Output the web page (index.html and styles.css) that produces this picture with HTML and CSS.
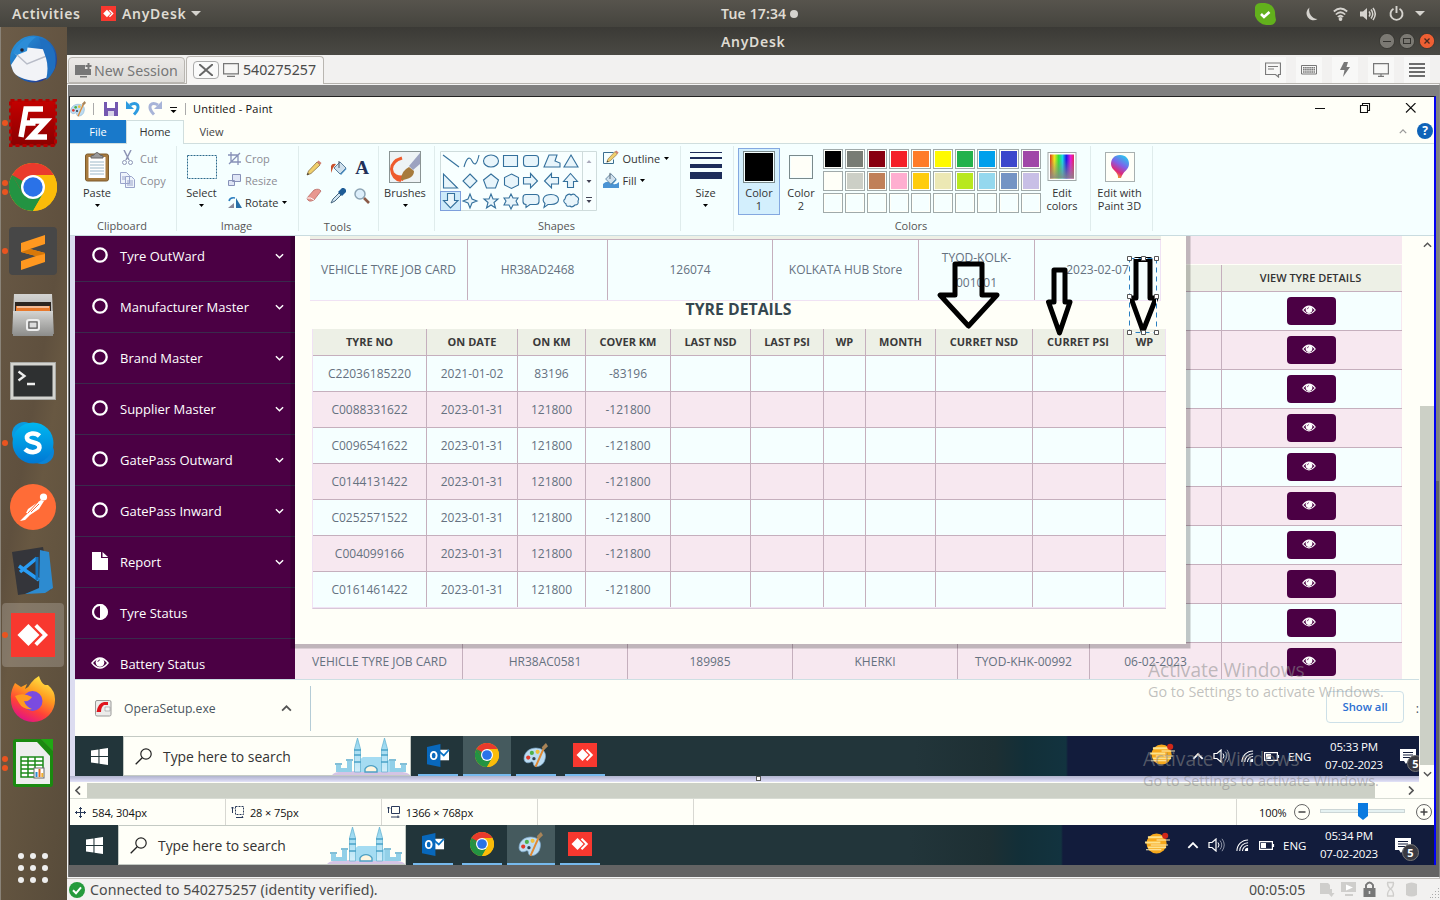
FILE: index.html
```html
<!DOCTYPE html>
<html lang="en">
<head>
<meta charset="utf-8">
<title>AnyDesk</title>
<link rel="stylesheet" href="styles.css">
</head>
<body>
<svg class="defs" width="0" height="0">
  <defs>
    <linearGradient id="rainbow"><stop offset="0" stop-color="#d83a1e"/><stop offset=".18" stop-color="#f5e61c"/><stop offset=".36" stop-color="#2ee03c"/><stop offset=".52" stop-color="#18d8e8"/><stop offset=".68" stop-color="#1818e8"/><stop offset=".86" stop-color="#e818d8"/><stop offset="1" stop-color="#e02858"/></linearGradient>
    <linearGradient id="fade" x2="0" y2="1"><stop offset=".2" stop-color="#888" stop-opacity="0"/><stop offset="1" stop-color="#888" stop-opacity=".9"/></linearGradient>
    <linearGradient id="pin" x1=".8" y1="0" x2=".3" y2="1"><stop offset="0" stop-color="#20d0f0"/><stop offset=".45" stop-color="#8060e8"/><stop offset=".75" stop-color="#e02878"/><stop offset="1" stop-color="#f0c020"/></linearGradient>
    <linearGradient id="skype" x2="0" y2="1"><stop offset="0" stop-color="#00b7f0"/><stop offset="1" stop-color="#0078d4"/></linearGradient>
    <linearGradient id="fox" x1=".8" y1="0" x2=".3" y2="1"><stop offset="0" stop-color="#fff04a"/><stop offset=".4" stop-color="#ff9a1f"/><stop offset=".7" stop-color="#ff4238"/><stop offset="1" stop-color="#e0108a"/></linearGradient>
    <linearGradient id="bird" x2="1" y2="1"><stop offset="0" stop-color="#2a9be0"/><stop offset=".6" stop-color="#1c60b4"/><stop offset="1" stop-color="#2a2078"/></linearGradient>
    <linearGradient id="steel" x2="0" y2="1"><stop offset="0" stop-color="#d4d4d2"/><stop offset="1" stop-color="#8c8c8a"/></linearGradient>
    <linearGradient id="redsq" x2="0" y2="1"><stop offset="0" stop-color="#c40000"/><stop offset="1" stop-color="#8a0000"/></linearGradient>
    <linearGradient id="ice" x2="0" y2="1"><stop offset="0" stop-color="#8fd4ee"/><stop offset="1" stop-color="#d2eefa"/></linearGradient>
    <symbol id="caret" viewBox="0 0 5 3"><path d="M0 0h5L2.500 3z"/></symbol>
    <symbol id="chev" viewBox="0 0 10 6"><path d="M1 1l4 4 4-4" fill="none" stroke="currentColor" stroke-width="1.600"/></symbol>
    <symbol id="ring" viewBox="0 0 16 16"><circle cx="8" cy="8" r="6.700" fill="none" stroke="currentColor" stroke-width="2.300"/></symbol>
    <symbol id="eye" viewBox="0 0 18 12"><path d="M1 6Q9-4 17 6 9 16 1 6z" fill="none" stroke="#fff" stroke-width="1.500"/><circle cx="9" cy="5.400" r="4.300" fill="#fff"/><path d="M6.800 5A2.300 2.300 0 0 1 9 2.900" fill="none" stroke="#4b0044" stroke-width=".8"/></symbol>
    <symbol id="chrome" viewBox="0 0 48 48"><circle cx="24" cy="24" r="24" fill="#fbbc09"/><path d="M3.200 12A24 24 0 0 0 24 48L34.400 30 24 24z" fill="#239342"/><path d="M24 12h20.800A24 24 0 0 1 24 48l10.400-18z" fill="#fbbc09"/><path d="M24 24L13.600 30 3.200 12A24 24 0 0 1 44.800 12H24z" fill="#ea3a2c"/><path d="M3.200 12l10.400 18L24 36V24z" fill="#239342"/><circle cx="24" cy="24" r="12" fill="#fff"/><circle cx="24" cy="24" r="9.700" fill="#2a72e8"/></symbol>
    <symbol id="anydesk" viewBox="0 0 24 24"><rect width="24" height="24" fill="#f8382f"/><path d="M3.500 12L9.500 6l6 6-6 6z" fill="#fff"/><path d="M13.500 6.800L18.700 12l-5.200 5.200" fill="none" stroke="#fff" stroke-width="2.100"/></symbol>
    <symbol id="palette" viewBox="0 0 24 24"><path d="M1 15C1 8 8 4 14 5c6 .5 9 5 7 11-1 5-7 8-10 6-2-2 0-4-3-4-3 2-7 1-7-3z" fill="#bcdcf2" stroke="#7aa6c8" stroke-width=".7"/><circle cx="5" cy="14" r="2" fill="#e03a2c"/><circle cx="8.500" cy="9.500" r="2" fill="#4cb04c"/><circle cx="14" cy="8.500" r="2" fill="#f0c03c"/><circle cx="10.500" cy="15" r="1.600" fill="#345"/><path d="M12 23L20 5" stroke="#e08a34" stroke-width="1.900"/><path d="M18 4l4-4 2 3-4 4z" fill="#a88458"/></symbol>
    <symbol id="outlook" viewBox="0 0 24 24"><path d="M11 6h12v11H11z" fill="#fff"/><path d="M13 8l4.500 4L23 6" fill="none" stroke="#0872c6" stroke-width="1.800"/><path d="M0 3l14-3v24L0 21z" fill="#0868bc"/><ellipse cx="7" cy="12" rx="3" ry="3.800" fill="none" stroke="#fff" stroke-width="2"/></symbol>
    <symbol id="win" viewBox="0 0 16 16"><path d="M0 2.300L7 1.300V7.500H0zM8 1.100L16 0v7.500H8zM0 8.500h7v6.200l-7-1zM8 8.500h8V16l-8-1.100z" fill="#fff"/></symbol>
    <symbol id="lens" viewBox="0 0 17 17"><circle cx="11" cy="6" r="5.200" fill="none" stroke="#222" stroke-width="1.200"/><path d="M7.200 9.800L.7 16.300" stroke="#222" stroke-width="1.300"/></symbol>
    <symbol id="castle" viewBox="0 0 78 37"><path d="M0 37q4-4 12-3 20-3 50 0 12-1 16 3z" fill="#d4c4e4"/><path d="M31 19h20l7 4v11H26V23z" fill="#a5dcf2"/><path d="M33 34v-3a7 7 0 0 1 12 0v3z" fill="#fff6e0" stroke="#4da0c4" stroke-width="1.400"/><path d="M22.500 34V11l3-11 3 11v23zM49.500 34V11l3-11 3 11v23z" fill="url(#ice)" stroke="#62b0d0" stroke-width=".7"/><path d="M22 12h7M22 17h7M22 24h7M49 12h7M49 17h7M49 24h7" stroke="#4aa2c8" stroke-width="1.300"/><path d="M4 27h5v7H4zM15 23h5v11h-5zM58 23h5v11h-5zM69 27h5v7h-5zM9 30h6v4H9zM63 30h6v4h-6z" fill="#92d0e8"/><path d="M3 26h7M14 22h7M57 22h7M68 26h7" stroke="#5aabcc" stroke-width="1.600"/></symbol>
    <symbol id="sun" viewBox="0 0 26 24"><circle cx="12" cy="12" r="10.500" fill="#f6a81c"/><path d="M3 5.500h16M0 11h16M3 16h19" stroke="#fde28c" stroke-width="2"/><path d="M12 8.400h14M6 13.600h18M1 18.500h16" stroke="#fff0b8" stroke-width="1.100"/><circle cx="21" cy="4" r="3.200" fill="#d02818"/></symbol>
    <symbol id="speaker" viewBox="0 0 17 14"><path d="M1 4.500h3l4-3.500v12L4 9.500H1z" fill="none" stroke="#fff" stroke-width="1.200"/><path d="M10 4.500q2 2.500 0 5" fill="none" stroke="#fff"/><path d="M12 2.500q3.500 4.500 0 9M14 .8q4.500 6 0 12.400" fill="none" stroke="#8d93a5"/></symbol>
    <symbol id="wifiw" viewBox="0 0 14 14"><path d="M1 13A12 12 0 0 1 13 1M4 13a9 9 0 0 1 9-9M7 13a6 6 0 0 1 6-6" fill="none" stroke="#fff" stroke-width="1.100"/><path d="M9.500 13a3.500 3.500 0 0 1 3.500-3.500V13z" fill="#fff"/></symbol>
    <symbol id="batt" viewBox="0 0 16 9"><path d="M.6.600h12.800v7.800H.6zM14.500 3v3" fill="none" stroke="#fff" stroke-width="1.200"/><path d="M2 2h5v5H2z" fill="#fff"/></symbol>
    <symbol id="note" viewBox="0 0 16 15"><path d="M0 0h16v12H8l-2 3-2-3H0z" fill="#fff"/><path d="M3 3.500h10M3 6h10M3 8.500h7" stroke="#121c3c"/></symbol>
    <symbol id="bucket" viewBox="0 0 16 16"><path d="M3 8l6-6 6 6-6 6z" fill="#cfe0ec" stroke="#5b7f9c"/><path d="M8 1v7" stroke="#456"/><path d="M9 14l6-6 .5 1-5.500 6z" fill="#4a8cc0"/></symbol>
    <symbol id="pencil" viewBox="0 0 16 16"><path d="M1 15l1.500-4L11 2l3 3-9 8.500z" fill="#f0cf6c" stroke="#8a7040" stroke-width=".8"/><path d="M11 2l1.500-1.500L15.500 3 14 5z" fill="#d08070"/><path d="M1 15l.8-2.200 1.400 1.400z" fill="#333"/></symbol>
  </defs>
</svg>

<header class="gnome">
  <span class="gnome-act">Activities</span>
  <svg class="gnome-ico" width="15" height="15"><use href="#anydesk"/></svg>
  <span class="gnome-app">AnyDesk</span>
  <svg class="gnome-caret" width="10" height="5" viewBox="0 0 10 5"><path d="M0 0h10L5 5z"/></svg>
  <span class="gnome-clock">Tue 17:34<i></i></span>
  <div class="tray">
    <svg width="22" height="22" viewBox="0 0 22 22"><path d="M1 4Q2 0 7 0q12-1 14 9 0 4 1 8-1 5-6 5Q5 23 1 13z" fill="#62b01c"/><path d="M7 11l3 3 5.500-5" fill="none" stroke="#fff" stroke-width="2.600"/></svg>
    <svg class="tray-moon" width="13" height="14" viewBox="0 0 13 14"><path d="M4.500.5a9 9 0 0 0 8 11.500A7 7 0 1 1 4.500.500z" fill="#d5d3ce"/></svg>
    <svg class="tray-wifi" width="15" height="14" viewBox="0 0 15 14"><path d="M.8 4.500q6.700-6 13.400 0M2.800 7.500q4.700-4.500 9.400 0M4.800 10q2.700-2.500 5.400 0" fill="none" stroke="#d5d3ce" stroke-width="1.700"/><circle cx="7.500" cy="12" r="1.900" fill="#d5d3ce"/></svg>
    <svg class="tray-vol" width="16" height="14" viewBox="0 0 16 14"><path d="M0 4.500h3L7 1v12L3 9.500H0z" fill="#d5d3ce"/><path d="M9 4.500q2 2.500 0 5M11 2.500q3.500 4.500 0 9M13 1q4.500 6 0 12" fill="none" stroke="#d5d3ce" stroke-width="1.500"/></svg>
    <svg class="tray-pow" width="15" height="15" viewBox="0 0 15 15"><path d="M4.500 2.700a6 6 0 1 0 6 0M7.500 0v7" fill="none" stroke="#d5d3ce" stroke-width="1.900"/></svg>
    <svg class="tray-caret" width="10" height="5" viewBox="0 0 10 5"><path d="M0 0h10L5 5z"/></svg>
  </div>
</header>

<div class="desk">
  <nav class="dock">
    <div class="app"><svg width="48" height="48" viewBox="0 0 48 48"><circle cx="24.500" cy="24" r="23.500" fill="url(#bird)"/><path d="M2 30L14 12l27 3-1 27L27 46Q8 44 4 36z" fill="#f2f3f7"/><path d="M6 18l12 11 22-9" fill="none" stroke="#b8bcc8" stroke-width="1.500"/><path d="M4 18Q14 0 27 2 18 8 18 16L8 20z" fill="#2c8dd8"/><path d="M30 3q20 6 16 30-4 9-9 12 3-12 0-22z" fill="#1f6fc0"/><circle cx="13" cy="15" r="1.800" fill="#223"/></svg></div>
    <div class="app run"><svg width="48" height="48" viewBox="0 0 48 48"><rect x="1.500" y="1.500" width="45" height="45" fill="url(#redsq)" stroke="#b40000" stroke-width="3" stroke-dasharray="4 3"/><path d="M12 38L17 10h17M14.500 24h12M21 22h16L22 38h16" fill="none" stroke="#fff" stroke-width="5.500"/></svg></div>
    <div class="app run two"><svg width="48" height="48"><use href="#chrome"/></svg></div>
    <div class="app run"><svg width="48" height="48" viewBox="0 0 48 48"><rect width="48" height="48" rx="4" fill="#474747"/><path d="M36 8v9l-15 5 15 4v9L12 43V34l15-5-15-4V16z" fill="#ff9820"/><path d="M12 25l9-3 15 4v1l-9 2z" fill="#d87808"/></svg></div>
    <div class="app"><svg width="48" height="48" viewBox="0 0 48 48"><path d="M5 3h38l2 40H3z" fill="url(#steel)"/><path d="M6 11h36v9H6z" fill="#2d2520"/><path d="M7 15h34v5H7z" fill="#e8792c"/><path d="M8 16h32" stroke="#fff"/><path d="M4 20h40v25H4z" fill="url(#steel)"/><rect x="18" y="29" width="12" height="10" rx="2" fill="none" stroke="#eee" stroke-width="2"/><rect x="20" y="31" width="8" height="6" fill="#ddd" stroke="#555"/></svg></div>
    <div class="app term"><svg width="46" height="38" viewBox="0 0 46 38"><rect x=".5" y=".5" width="45" height="37" fill="#d4d4d0" stroke="#a8a8a4"/><rect x="3.500" y="3.500" width="39" height="31" fill="#2e3031"/><path d="M8.500 9.500l6 4.500-6 4.500M17 22h8" fill="none" stroke="#eee" stroke-width="2.300"/></svg></div>
    <div class="app run"><svg width="44" height="44" viewBox="0 0 44 44"><circle cx="13" cy="13" r="12" fill="#0a9ae0"/><circle cx="31" cy="31" r="12" fill="#0a84d8"/><circle cx="22" cy="22" r="20.500" fill="url(#skype)"/><path d="M28.500 15q-3-3-7.500-2.500-5.500.8-5 4.700.5 3 6 4 7 1.300 6.500 5.500-.7 4-6.500 4.500-5 0-8-3" fill="none" stroke="#fff" stroke-width="4.600"/></svg></div>
    <div class="app"><svg width="46" height="46" viewBox="0 0 46 46"><circle cx="23" cy="23" r="23" fill="#ff6c37"/><circle cx="33.500" cy="13" r="3.600" fill="#fff"/><path d="M31 16L18 25l-2 4 2 0-8 8 5-1 5-5 9-6 5-8z" fill="#fff"/><path d="M18 29l10-11M21 28l8-8" stroke="#ff6c37"/></svg></div>
    <div class="app"><svg width="42" height="48" viewBox="0 0 42 48"><path d="M0 5l31-5 8 43-33 5z" fill="#34353a"/><path d="M28 3l9 2 4 36-8 5-20 1 14-6z" fill="#2d8bd0"/><path d="M25 11L8 25M7 19l20 14" fill="none" stroke="#2a9df4" stroke-width="3.500"/><path d="M25 10v23" stroke="#1670b8" stroke-width="3"/></svg></div>
    <div class="app run on"><svg width="44" height="44"><use href="#anydesk"/></svg></div>
    <div class="app"><svg width="46" height="46" viewBox="0 0 46 46"><path d="M1 23Q0 16 5 7l6 4 6-3-2 5q4-2 6-6 4-5 8-7 2 7 6 9l3 0q7 6 7 14A22 22 0 0 1 23 46 22 22 0 0 1 1 23z" fill="url(#fox)"/><circle cx="22.500" cy="25" r="10" fill="#7a4be0"/><path d="M5 20q8-4 17 1-3 5-8 4 2 6 8 8-9 1-13-6z" fill="#ff9a20"/></svg></div>
    <div class="app run two"><svg width="40" height="48" viewBox="0 0 40 48"><path d="M3 0h25l12 12v33q0 3-3 3H3q-3 0-3-3V3q0-3 3-3z" fill="#1a8a10"/><path d="M28 0h12v12z" fill="#20a814"/><path d="M3 3h21l13 14v28H3z" fill="#eee"/><path d="M8 18h22v20H8zM8 22h22M8 26h22M8 30h22M8 34h22M15 18v20M22 18v20" fill="#fff" stroke="#1c8a1a" stroke-width="1.500"/><rect x="21" y="29" width="10" height="10" fill="#fff" stroke="#666"/><path d="M26.500 38v-8" stroke="#e06820" stroke-width="2"/><path d="M23.500 38v-5" stroke="#2a8ad0" stroke-width="2"/><path d="M29.300 38v-4" stroke="#f0b030" stroke-width="2"/></svg></div>
    <svg class="grid-ico" width="30" height="30" viewBox="0 0 30 30" fill="#eee"><circle cx="3" cy="3" r="3"/><circle cx="15" cy="3" r="3"/><circle cx="27" cy="3" r="3"/><circle cx="3" cy="15" r="3"/><circle cx="15" cy="15" r="3"/><circle cx="27" cy="15" r="3"/><circle cx="3" cy="27" r="3"/><circle cx="15" cy="27" r="3"/><circle cx="27" cy="27" r="3"/></svg>
  </nav>

  <section class="window">
    <div class="wtitle"><span>AnyDesk</span>
      <div class="wbtns">
        <svg width="16" height="16" viewBox="0 0 16 16"><circle cx="8" cy="8" r="7.600" fill="#7b7973" stroke="#34332f" stroke-width=".8"/><path d="M4 8.500h8" stroke="#34332f"/></svg>
        <svg width="16" height="16" viewBox="0 0 16 16"><circle cx="8" cy="8" r="7.600" fill="#7b7973" stroke="#34332f" stroke-width=".8"/><rect x="4.500" y="5.500" width="7" height="5" fill="none" stroke="#34332f"/></svg>
        <svg width="16" height="16" viewBox="0 0 16 16"><circle cx="8" cy="8" r="7.600" fill="#ef5f33" stroke="#34332f" stroke-width=".8"/><path d="M5.500 5.500l5 5M10.500 5.500l-5 5" stroke="#4a2a20" stroke-width="1.300"/></svg>
      </div>
    </div>
    <div class="tabs">
      <div class="tab idle"><svg width="17" height="15" viewBox="0 0 17 15"><path d="M0 2h10v4h6v6H0zM5 13h7v1.500H5z" fill="#777"/><path d="M13.500 0v6M10.500 3h6" stroke="#777" stroke-width="2"/></svg>New Session</div>
      <div class="tab live"><span class="close"><svg width="14" height="12" viewBox="0 0 14 12"><path d="M0 0l14 12M14 0L0 12" stroke="#666" stroke-width="2"/></svg></span><svg width="16" height="14" viewBox="0 0 16 14"><path d="M.6.600h14.800v10.200H.6zM4 13.400h8" fill="none" stroke="#777" stroke-width="1.200"/></svg>540275257</div>
      <div class="tools-r">
        <i><svg width="16" height="16" viewBox="0 0 16 16"><path d="M.5 1h15v11.500h-2v2.500l-3-2.500H.5zM3 4.500h10M3 7h6" fill="none" stroke="#7b7b7b" stroke-width="1.200"/></svg></i>
        <i><svg width="16" height="10" viewBox="0 0 16 10"><path d="M.5.500h15v8.500H.5z" fill="none" stroke="#777"/><path d="M2 2.700h12M2 4.800h12M2 7h12" stroke="#777" stroke-width="1.400" stroke-dasharray="1.600 .5"/></svg></i>
        <i><svg width="10" height="16" viewBox="0 0 10 16"><path d="M4 0h4L6.500 5H10L3 15l1.500-7H0z" fill="#777"/></svg></i>
        <i><svg width="16" height="14" viewBox="0 0 16 14"><path d="M.6.600h14.800v10.200H.6zM8 11v2M5 13.400h6" fill="none" stroke="#777" stroke-width="1.200"/></svg></i>
        <i><svg width="16" height="14" viewBox="0 0 16 14"><path d="M0 1h16M0 5h16M0 9h16M0 13h16" stroke="#6d6d6d" stroke-width="2"/></svg></i>
      </div>
    </div>

    <div class="view">
      <main class="paint">
        <div class="ptitle">
          <svg width="16" height="16"><use href="#palette"/></svg><b class="bar"></b>
          <svg class="q1" width="14" height="14" viewBox="0 0 14 14"><path d="M0 0h14v14H0z" fill="#7458b0"/><path d="M3 0h8v6H3z" fill="#fff"/><path d="M4 9h6v5H4z" fill="#d8d4e8"/></svg>
          <svg class="q2" width="14" height="15" viewBox="0 0 14 15"><path d="M0 0v8h8z" fill="#2d9be0"/><path d="M4 4q5-3 7.500 0 2 4-3.500 9.500" fill="none" stroke="#2d9be0" stroke-width="3"/></svg>
          <svg class="q3" width="14" height="15" viewBox="0 0 14 15"><path d="M14 0v8H6z" fill="#a8b4d8"/><path d="M10 4Q5 1 2.500 4q-2 4 3.500 9.500" fill="none" stroke="#a8b4d8" stroke-width="3"/></svg>
          <svg class="q4" width="7" height="6" viewBox="0 0 7 6"><path d="M0 .5h7" stroke="#111"/><path d="M.5 3h6l-3 3z"/></svg><b class="bar"></b>
          <span>Untitled - Paint</span>
          <svg class="wc" width="102" height="10" viewBox="0 0 102 10" fill="none" stroke="#111"><path d="M0 5.500h10M45.500 2.500h7v7h-7zM47.500 2.500v-2h7v7h-2M91 0l9.500 9.500M100.500 0L91 9.500" stroke-width="1.100"/></svg>
        </div>
        <div class="ptabs"><span class="file">File</span><span class="home">Home</span><span class="vw">View</span>
          <svg class="up" width="8" height="5"><use href="#chev"/></svg><span class="help">?</span></div>
        <div class="ribbon">
          <div class="grp g-clip"><div class="row">
            <div class="big"><svg width="32" height="32" viewBox="0 0 32 32"><rect x="4.500" y="3" width="23" height="27" rx="2" fill="#a77b3e" stroke="#7d5b2c"/><path d="M7.500 6h17v21h-17z" fill="#fff"/><path d="M9 11h14M9 14h14M9 17h14M9 20h14M9 23h14" stroke="#9db8c8"/><path d="M10 5l3-1q3-5 6 0l3 1v2H10z" fill="#999" stroke="#666"/></svg><span>Paste</span><svg class="car"><use href="#caret"/></svg></div>
            <div class="col off"><div><svg width="16" height="16" viewBox="0 0 16 16"><path d="M4 0l5 10M11 0L6 10" stroke="#8e95b5" stroke-width="1.500"/><circle cx="4.500" cy="12.500" r="2" fill="none" stroke="#8e95b5"/><circle cx="10.500" cy="12.500" r="2" fill="none" stroke="#8e95b5"/></svg>Cut</div><div><svg width="16" height="16" viewBox="0 0 16 16"><path d="M.5.500h6l3 3v8h-9zM5.500 4.500h6l3 3v8h-9z" fill="#eef4fb" stroke="#9aa4cb"/><path d="M7 9h6M7 11h6M7 13h6M2 5h3M2 7h3" stroke="#9aa4cb"/></svg>Copy</div></div>
          </div><label>Clipboard</label></div>
          <div class="grp g-img"><div class="row">
            <div class="big"><svg width="32" height="32" viewBox="0 0 32 32"><rect x="1.500" y="4.500" width="29" height="23" fill="none" stroke="#2d6a8c" stroke-dasharray="2 1"/></svg><span>Select</span><svg class="car"><use href="#caret"/></svg></div>
            <div class="col"><div class="off"><svg width="13" height="13" viewBox="0 0 13 13"><path d="M3 0v10h10M0 3h10v10M1 12L12 1" fill="none" stroke="#8791b8" stroke-width="1.300"/></svg>Crop</div><div class="off"><svg width="13" height="13" viewBox="0 0 13 13"><path d="M4.500.500h8v7h-8zM.5 6.500h6v5h-6z" fill="#dfe6f6" stroke="#8791b8"/></svg>Resize</div><div><svg width="14" height="13" viewBox="0 0 14 13"><path d="M0 12h6V7z" fill="#889"/><path d="M8 12V2l6 10z" fill="#2870a8"/><path d="M1 5q1-4 6-3" fill="none" stroke="#2d7fc0" stroke-width="1.500"/></svg>Rotate<svg class="car"><use href="#caret"/></svg></div></div>
          </div><label>Image</label></div>
          <div class="grp g-tools"><div class="toolgrid">
            <svg width="16" height="16"><use href="#pencil"/></svg>
            <svg width="17" height="16" viewBox="0 0 17 16"><g transform="translate(1)"><use href="#bucket" width="16" height="16"/></g><path d="M1 13V6q1-3 5-2L3 8z" fill="#c8502c"/></svg>
            <b class="glyphA">A</b>
            <svg width="16" height="15" viewBox="0 0 16 15"><path d="M1 10l7-8q5-2 7 1l-7 9q-6 3-7-2z" fill="#e89890" stroke="#b86a64" stroke-width=".8"/><path d="M1 10q4-1 7 2" fill="none" stroke="#fff"/></svg>
            <svg width="16" height="16" viewBox="0 0 16 16"><path d="M1 15l2-4 6-6 2 2-6 6z" fill="#cfe4f2" stroke="#47667e"/><path d="M8 4l4-4q3-.5 4 2v2l-4 4z" fill="#1e5c96"/></svg>
            <svg width="16" height="16" viewBox="0 0 16 16"><circle cx="6" cy="6" r="5" fill="#dceefa" stroke="#8ca4b4" stroke-width="1.500"/><path d="M10 10l5 5" stroke="#8a5a48" stroke-width="2.600"/></svg>
          </div><label>Tools</label></div>
          <div class="grp g-brush"><div class="row"><div class="big"><svg width="32" height="32" viewBox="0 0 32 32"><rect x=".5" y=".5" width="31" height="31" fill="#eef3f5" stroke="#8a9494"/><path d="M13 7Q3 10 2.500 18q1 10 9.500 11.500" fill="none" stroke="#ee5a2c" stroke-width="3"/><path d="M4 20q4 6 12 4l-2 6Q5 29 4 20z" fill="#ee5a2c"/><path d="M31 2L20 15l4 4 7-6z" fill="#9ca2c0"/><path d="M12 29q0-9 8-13l5 4q0 8-13 9z" fill="#a77a3c"/></svg><span>Brushes</span><svg class="car"><use href="#caret"/></svg></div></div></div>
          <div class="grp g-shapes"><div class="row">
            <svg class="gallery" width="157" height="60" viewBox="440 151 157 60"><path d="M440.500 151.500h156v59h-156zM582.500 151.500v59" fill="#f8ffff" stroke="#cfdcdc"/><rect x="440.500" y="191.500" width="20" height="19" fill="#cdeafa" stroke="#7d9fdc"/>
              <g fill="#e8f5fb" stroke="#34709c" stroke-width="1.100"><path d="M443 155l16 12"/><path d="M464 167q4-14 8-6t7-6" fill="none"/><ellipse cx="491" cy="161" rx="7.500" ry="6"/><path d="M503.500 155.500h14v11h-14z"/><rect x="523.500" y="155.500" width="15" height="11" rx="3"/><path d="M544 167l5-12h8l-2 6 5 2v4z"/><path d="M571 155l7 12h-14z"/>
              <path d="M443.500 174v14h14z"/><path d="M470 174l7 7-7 7-7-7z"/><path d="M491 174l7.500 6-3 8h-9l-3-8z"/><path d="M511.500 174l7 3.500v7.500l-7 3.500-7-3.500v-7.500z"/><path d="M523.500 177.500h7v-4l7 7.500-7 7v-4h-7z"/><path d="M558.500 177.500h-7v-4l-7 7.500 7 7v-4h7z"/><path d="M567.500 187.500v-6h-4l7-8 7 8h-4v6z"/>
              <path d="M447.500 193.500h7v7h3.500l-7.500 7.500-7-7.500h4z"/><path d="M470 194l2 5 5 2-5 2-2 5-2-5-5-2 5-2z"/><path d="M491 194l2 5h5l-4 3.500 1.500 5.500-4.500-3-4.500 3 1.500-5.500-4-3.500h5z"/><path d="M511 194l2 4h5l-2 3 2 4h-5l-2 4-2-4h-5l2-4-2-3h5z"/><path d="M526 194.500h10q3 0 3 3v4q0 3-3 3h-6l-4 3v-3q-3 0-3-3v-4q0-3 3-3z"/><path d="M551 194.500c10 0 10 10 0 10l-3 0-4 3 1-4c-4-4-1-9 6-9z"/><path d="M566 196q3-3 5-1 3-2 5 1 4 2 2 5 1 4-3 4-3 3-5 1-4 1-4-2-4-3-1-5z"/></g>
              <path d="M586.500 163h5l-2.500-3z" fill="#aab"/><path d="M586.500 180h5l-2.500 3zM586.500 200h5l-2.500 3zM586 197h6v1h-6z" fill="#445"/></svg>
            <div class="col"><div><svg width="16" height="16" viewBox="0 0 16 16"><path d="M.5 2.500h10M.5 2.500v11h10v-4" fill="none" stroke="#3b6f90"/><use href="#pencil" x="3" width="13" height="13"/></svg>Outline<svg class="car"><use href="#caret"/></svg></div><div><svg width="16" height="16" viewBox="0 0 16 16"><path d="M0 12q4-4 8-1t8-1v6H0z" fill="#4a94d4"/><use href="#bucket" width="14" height="14"/></svg>Fill<svg class="car"><use href="#caret"/></svg></div></div>
          </div><label>Shapes</label></div>
          <div class="grp g-size"><div class="row"><div class="big"><svg width="32" height="32" viewBox="0 0 32 32"><path d="M0 1h32v1H0zM0 6h32v2H0zM0 13h32v4H0zM0 21h32v7H0z" fill="#1d2d5a"/></svg><span>Size</span><svg class="car"><use href="#caret"/></svg></div></div></div>
          <div class="grp g-colors"><div class="row">
            <div class="big sel"><i class="c1"></i><span>Color<br>1</span></div>
            <div class="big"><i class="c2"></i><span>Color<br>2</span></div>
            <div class="pal"><i class="k1"></i><i class="k2"></i><i class="k3"></i><i class="k4"></i><i class="k5"></i><i class="k6"></i><i class="k7"></i><i class="k8"></i><i class="k9"></i><i class="k10"></i><i class="k11"></i><i class="k12"></i><i class="k13"></i><i class="k14"></i><i class="k15"></i><i class="k16"></i><i class="k17"></i><i class="k18"></i><i class="k19"></i><i class="k20"></i><i></i><i></i><i></i><i></i><i></i><i></i><i></i><i></i><i></i><i></i></div>
            <div class="big edit"><svg width="32" height="32" viewBox="0 0 32 32"><rect x="2" y="1.500" width="28" height="28" fill="#fff" stroke="#a0a8a8"/><path d="M4 3.500h24v24H4z" fill="url(#rainbow)"/><path d="M4 3.500h24v24H4z" fill="url(#fade)"/></svg><span>Edit<br>colors</span></div>
          </div><label>Colors</label></div>
          <div class="grp g-3d"><div class="row"><div class="big"><svg width="32" height="32" viewBox="0 0 32 32"><rect x="1.500" y="1.500" width="29" height="29" fill="#fffff8" stroke="#a8b0b0"/><path d="M16 4c6 0 9 4 9 9 0 6-6 7-8 14l-3 0c1-6-7-8-7-14 0-5 3-9 9-9z" fill="url(#pin)"/></svg><span>Edit with<br>Paint 3D</span></div></div></div>
        </div>

        <div class="work">
          <div class="canvas">
            <div class="page">
              <ul class="side">
                <li><svg width="16" height="16"><use href="#ring"/></svg><span>Tyre OutWard</span><svg class="ch"><use href="#chev"/></svg></li>
                <li><svg width="16" height="16"><use href="#ring"/></svg><span>Manufacturer Master</span><svg class="ch"><use href="#chev"/></svg></li>
                <li><svg width="16" height="16"><use href="#ring"/></svg><span>Brand Master</span><svg class="ch"><use href="#chev"/></svg></li>
                <li><svg width="16" height="16"><use href="#ring"/></svg><span>Supplier Master</span><svg class="ch"><use href="#chev"/></svg></li>
                <li><svg width="16" height="16"><use href="#ring"/></svg><span>GatePass Outward</span><svg class="ch"><use href="#chev"/></svg></li>
                <li><svg width="16" height="16"><use href="#ring"/></svg><span>GatePass Inward</span><svg class="ch"><use href="#chev"/></svg></li>
                <li><svg width="16" height="18" viewBox="0 0 16 18"><path d="M0 0h9v6h7v12H0z" fill="#fff"/><path d="M10.500 0L16 5h-5.500z" fill="#fff"/></svg><span>Report</span><svg class="ch"><use href="#chev"/></svg></li>
                <li><svg width="16" height="16" viewBox="0 0 16 16"><circle cx="8" cy="8" r="6.900" fill="none" stroke="#fff" stroke-width="2"/><path d="M8 1a7 7 0 0 0 0 14z" fill="#4b0044"/><path d="M8 1a7 7 0 0 1 0 14z" fill="#fff"/><circle cx="8" cy="8" r="6.900" fill="none" stroke="#fff" stroke-width="2"/></svg><span>Tyre Status</span></li>
                <li><svg class="weye" width="18" height="12"><use href="#eye"/></svg><span>Battery Status</span></li>
              </ul>
              <div class="back">
                <div class="band"></div>
                <div class="br hd"><span></span><span></span><span></span><span></span><span></span><span></span><span>VIEW TYRE DETAILS</span></div>
                <div class="br"><span></span><span></span><span></span><span></span><span></span><span></span><span><b><svg width="14" height="10"><use href="#eye"/></svg></b></span></div>
                <div class="br"><span></span><span></span><span></span><span></span><span></span><span></span><span><b><svg width="14" height="10"><use href="#eye"/></svg></b></span></div>
                <div class="br"><span></span><span></span><span></span><span></span><span></span><span></span><span><b><svg width="14" height="10"><use href="#eye"/></svg></b></span></div>
                <div class="br"><span></span><span></span><span></span><span></span><span></span><span></span><span><b><svg width="14" height="10"><use href="#eye"/></svg></b></span></div>
                <div class="br"><span></span><span></span><span></span><span></span><span></span><span></span><span><b><svg width="14" height="10"><use href="#eye"/></svg></b></span></div>
                <div class="br"><span></span><span></span><span></span><span></span><span></span><span></span><span><b><svg width="14" height="10"><use href="#eye"/></svg></b></span></div>
                <div class="br"><span></span><span></span><span></span><span></span><span></span><span></span><span><b><svg width="14" height="10"><use href="#eye"/></svg></b></span></div>
                <div class="br"><span></span><span></span><span></span><span></span><span></span><span></span><span><b><svg width="14" height="10"><use href="#eye"/></svg></b></span></div>
                <div class="br"><span></span><span></span><span></span><span></span><span></span><span></span><span><b><svg width="14" height="10"><use href="#eye"/></svg></b></span></div>
                <div class="br last"><span>VEHICLE TYRE JOB CARD</span><span>HR38AC0581</span><span>189985</span><span>KHERKI</span><span>TYOD-KHK-00992</span><span>06-02-2023</span><span><b><svg width="14" height="10"><use href="#eye"/></svg></b></span></div>
              </div>
              <div class="modal">
                <div class="job"><span>VEHICLE TYRE JOB CARD</span><span>HR38AD2468</span><span>126074</span><span>KOLKATA HUB Store</span><span>TYOD-KOLK-<br>001001</span><span>2023-02-07</span></div>
                <h2>TYRE DETAILS</h2>
                <div class="tt">
                  <div class="tr th"><span>TYRE NO</span><span>ON DATE</span><span>ON KM</span><span>COVER KM</span><span>LAST NSD</span><span>LAST PSI</span><span>WP</span><span>MONTH</span><span>CURRET NSD</span><span>CURRET PSI</span><span>WP</span></div>
                  <div class="tr"><span>C22036185220</span><span>2021-01-02</span><span>83196</span><span>-83196</span><span></span><span></span><span></span><span></span><span></span><span></span><span></span></div>
                  <div class="tr"><span>C0088331622</span><span>2023-01-31</span><span>121800</span><span>-121800</span><span></span><span></span><span></span><span></span><span></span><span></span><span></span></div>
                  <div class="tr"><span>C0096541622</span><span>2023-01-31</span><span>121800</span><span>-121800</span><span></span><span></span><span></span><span></span><span></span><span></span><span></span></div>
                  <div class="tr"><span>C0144131422</span><span>2023-01-31</span><span>121800</span><span>-121800</span><span></span><span></span><span></span><span></span><span></span><span></span><span></span></div>
                  <div class="tr"><span>C0252571522</span><span>2023-01-31</span><span>121800</span><span>-121800</span><span></span><span></span><span></span><span></span><span></span><span></span><span></span></div>
                  <div class="tr"><span>C004099166</span><span>2023-01-31</span><span>121800</span><span>-121800</span><span></span><span></span><span></span><span></span><span></span><span></span><span></span></div>
                  <div class="tr"><span>C0161461422</span><span>2023-01-31</span><span>121800</span><span>-121800</span><span></span><span></span><span></span><span></span><span></span><span></span><span></span></div>
                </div>
              </div>
            </div>
            <div class="dl">
              <svg width="17" height="17" viewBox="0 0 17 17"><rect x=".5" y=".5" width="15.500" height="15.500" rx="1.500" fill="#ececea" stroke="#9a9a98"/><path d="M1.500 12Q3 3 9 2h4v3H9q-3 2-3 7z" fill="#e0141c"/><path d="M10 7h5v4h-5z" fill="#f4f4f4" stroke="#999" stroke-width=".6"/></svg>
              <span>OperaSetup.exe</span><svg class="dlc" width="11" height="7"><use href="#chev"/></svg><i></i><b>Show all</b><em>:</em>
            </div>
            <div class="taskbar">
              <div class="start"><svg width="17" height="17"><use href="#win"/></svg></div>
              <div class="search"><svg width="17" height="17"><use href="#lens"/></svg><span>Type here to search</span><svg class="cas" width="78" height="37"><use href="#castle"/></svg></div>
              <div class="ta ol"><svg width="23" height="23"><use href="#outlook"/></svg></div>
              <div class="ta cr act"><svg width="24" height="24"><use href="#chrome"/></svg></div>
              <div class="ta pt"><svg width="25" height="25"><use href="#palette"/></svg></div>
              <div class="ta ad"><svg width="24" height="24"><use href="#anydesk"/></svg></div>
              <div class="systray"><svg width="25" height="23"><use href="#sun"/></svg><svg class="s2" width="12" height="7"><use href="#chev"/></svg><svg class="s3" width="17" height="14"><use href="#speaker"/></svg><svg class="s4" width="13" height="13"><use href="#wifiw"/></svg><svg class="s5" width="16" height="9"><use href="#batt"/></svg><span class="lang">ENG</span><span class="clk">05:33 PM<br>07-02-2023</span><span class="nt"><svg width="16" height="15"><use href="#note"/></svg><b>5</b></span></div>
            </div>
            <svg class="arrows" width="900" height="110" viewBox="300 236 900 110"><g fill="none" stroke="#000" stroke-width="5" stroke-linejoin="round"><path d="M955 264h27v31h15l-28.500 31L940 295h15z"/><path d="M1054 270h11v32h5l-10.500 31-11-31h5.500z"/><path d="M1136 259.500h14V298h6l-13 33-12-33h5z"/></g><path d="M1129.500 258.500h27v74h-27z" fill="none" stroke="#fff"/><path d="M1129.500 258.500h27v74h-27z" fill="none" stroke="#2a7fc0" stroke-dasharray="5 4"/><g fill="#fff" stroke="#555"><path d="M1127.500 256.500h4v4h-4zM1141.500 256.500h4v4h-4zM1154.500 256.500h4v4h-4zM1127.500 294.500h4v4h-4zM1154.500 294.500h4v4h-4zM1127.500 330.500h4v4h-4zM1141.500 330.500h4v4h-4zM1154.500 330.500h4v4h-4z"/></g></svg>
            <span class="handle"></span>
            <div class="mark m1"><p>Activate Windows</p><small>Go to Settings to activate Windows.</small></div>
          </div>
          <div class="vs"><svg width="9" height="6"><use href="#chev"/></svg><i></i><svg width="9" height="6"><use href="#chev"/></svg></div>
        </div>
        <div class="hs"><svg width="6" height="9" viewBox="0 0 6 9"><path d="M5 .5L1 4.500l4 4" fill="none" stroke="#555" stroke-width="1.700"/></svg><i></i><svg width="6" height="9" viewBox="0 0 6 9"><path d="M1 .5l4 4-4 4" fill="none" stroke="#555" stroke-width="1.700"/></svg></div>
        <div class="pstat">
          <div class="p1"><svg width="11" height="11" viewBox="0 0 11 11"><path d="M5.500 0v11M0 5.500h11M4 1.500h3M4 9.500h3M1.500 4v3M9.500 4v3" stroke="#2a3a5a"/></svg>584, 304px</div>
          <div class="p2"><svg width="13" height="12" viewBox="0 0 13 12"><path d="M1.500 1v6M0 2.500L1.500 1 3 2.500M5 11.500h7M11 10l1 1.500" fill="none" stroke="#2a3a5a"/><path d="M4.500.500h8v8h-8z" fill="none" stroke="#2a3a5a" stroke-dasharray="2 1"/></svg>28 × 75px</div>
          <div class="p2"><svg width="13" height="12" viewBox="0 0 13 12"><path d="M1.500 1v6M0 2.500L1.500 1 3 2.500M4 11h8.500M11 9.500V12M4.500.500h8v7h-8z" fill="none" stroke="#2a3a5a"/></svg>1366 × 768px</div>
          <div></div><div class="p5"></div>
          <div class="zoom">100%<svg width="162" height="18" viewBox="0 0 162 18"><g fill="#fffff8" stroke="#666"><circle cx="8" cy="9" r="7.500"/><circle cx="130" cy="9" r="7.500"/></g><path d="M4.500 9h7M126.500 9h7M130 5.500v7" stroke="#444" stroke-width="1.500"/><rect x="26.500" y="6.500" width="84" height="3" fill="#e6f2f2" stroke="#ccd6d6"/><path d="M64 0h10v13l-5 4-5-4z" fill="#0a7ae0"/></svg></div>
        </div>
        <div class="taskbar">
          <div class="start"><svg width="17" height="17"><use href="#win"/></svg></div>
          <div class="search"><svg width="17" height="17"><use href="#lens"/></svg><span>Type here to search</span><svg class="cas" width="78" height="37"><use href="#castle"/></svg></div>
          <div class="ta ol"><svg width="23" height="23"><use href="#outlook"/></svg></div>
          <div class="ta cr"><svg width="24" height="24"><use href="#chrome"/></svg></div>
          <div class="ta pt act"><svg width="25" height="25"><use href="#palette"/></svg></div>
          <div class="ta ad"><svg width="24" height="24"><use href="#anydesk"/></svg></div>
          <div class="systray"><svg width="25" height="23"><use href="#sun"/></svg><svg class="s2" width="12" height="7"><use href="#chev"/></svg><svg class="s3" width="17" height="14"><use href="#speaker"/></svg><svg class="s4" width="13" height="13"><use href="#wifiw"/></svg><svg class="s5" width="16" height="9"><use href="#batt"/></svg><span class="lang">ENG</span><span class="clk">05:34 PM<br>07-02-2023</span><span class="nt"><svg width="16" height="15"><use href="#note"/></svg><b>5</b></span></div>
        </div>
        <div class="mark m2"><p>Activate Windows</p><small>Go to Settings to activate Windows.</small></div>
      </main>
    </div>

    <footer class="status">
      <svg width="16" height="16" viewBox="0 0 16 16"><circle cx="8" cy="8" r="8" fill="#259a3c"/><path d="M4 8.300l3 3 5-6" fill="none" stroke="#fff" stroke-width="2"/></svg>
      <span class="conn">Connected to 540275257 (identity verified).</span>
      <span class="time">00:05:05</span>
      <svg class="sico" width="104" height="18" viewBox="0 0 104 18"><g fill="#cfcecc"><path d="M1 2h8l2 2v9H1zM11 8h2v4h2.500L12.500 16 9 12h2zM22 1h15v10H22zM26 13h8v2h-8zM87 3q5.500-3 11 0v11q-5.500 3-11 0z"/></g><path d="M27 3.500l7 3-7 3z" fill="#fff"/><path d="M68 1.500h7M68 15h7M68.500 2q0 4 3 6-3 2-3 6.500M74.500 2q0 4-3 6 3 2 3 6.500" fill="none" stroke="#cfcecc" stroke-width="1.400"/><rect x="44.500" y="7" width="12" height="9" fill="#777"/><path d="M47 7V4q3.500-5 7 0v3" fill="none" stroke="#777" stroke-width="1.900"/><path d="M50.500 10v3" stroke="#ddd" stroke-width="1.600"/></svg>
      <svg class="grip" width="10" height="10" viewBox="0 0 10 10" fill="#aaa"><path d="M8 0h1v1H8zM5 3h1v1H5zM8 3h1v1H8zM2 6h1v1H2zM5 6h1v1H5zM8 6h1v1H8zM0 9h1v1H0zM2 9h1v1H2zM5 9h1v1H5zM8 9h1v1H8z"/></svg>
    </footer>
  </section>
</div>
</body>
</html>
```

FILE: styles.css
```css
* { box-sizing: border-box; }
body { margin: 0; width: 1440px; height: 900px; overflow: hidden; display: flex; flex-direction: column; font-family: "Open Sans", "Noto Sans", sans-serif; background: #3c3b37; }
svg { display: block; flex: none; }
i, em { font-style: normal; }
.defs { width: 0; height: 0; flex: 0 0 0; }

.gnome { height: 27px; flex: none; display: flex; align-items: center; padding-left: 12px; background: linear-gradient(#57544d, #45443e); color: #dfdbd2; font: 600 14px "Noto Sans", sans-serif; }
.gnome-act { width: 68px; letter-spacing: .6px; }
.gnome-ico { margin-left: 21px; }
.gnome-app { margin-left: 6px; width: 64px; letter-spacing: .7px; }
.gnome-caret, .tray-caret { fill: #d5d3ce; }
.gnome-caret { margin-left: 5px; }
.gnome-clock { margin-left: 520px; width: 80px; display: flex; align-items: center; font-size: 14px; letter-spacing: .15px; white-space: nowrap; }
.gnome-clock i { width: 8px; height: 8px; border-radius: 4px; background: #d5d3ce; margin-left: 4px; flex: none; }
.tray { display: flex; align-items: center; margin-left: auto; padding-right: 15px; }
.tray-moon { margin-left: 29px; }
.tray-wifi { margin-left: 15px; }
.tray-vol { margin-left: 12px; }
.tray-pow { margin-left: 13px; }
.tray-caret { margin-left: 11px; }

.desk { flex: 1; display: flex; min-height: 0; }
.dock { width: 67px; flex: none; background: linear-gradient(100deg, #6c5c48, #5f503e 45%, #685842 55%, #574b3a); border-left: 1px solid #8a8378; }
.app { height: 64px; margin: 0 3px 0 1px; display: flex; align-items: center; justify-content: center; position: relative; }
.app.on { background: rgba(255,255,255,.2); border-radius: 4px; }
.app.run::before { content: ""; position: absolute; left: 0; top: 29px; width: 6px; height: 6px; border-radius: 3px; background: #e95420; }
.app.two::before { top: 25px; box-shadow: 0 9px #e95420; }
.app.term { padding-top: 3px; }
.grid-ico { margin: 58px 0 0 17px; }

.window { flex: 1; display: flex; flex-direction: column; min-width: 0; }
.wtitle { height: 28px; display: flex; align-items: center; background: linear-gradient(#3b3a36, #4a4944); color: #dfdbd2; font: 600 14px "Noto Sans", sans-serif; letter-spacing: .7px; padding-left: 654px; }
.wbtns { margin-left: auto; display: flex; gap: 4px; padding-right: 5px; }
.tabs { height: 29px; display: flex; align-items: flex-end; background: #f2f1f0; border-bottom: 1px solid #b6b3ae; font: 14.2px "Noto Sans", sans-serif; color: #555; padding-left: 1px; }
.tab { display: flex; align-items: center; border: 1px solid #b9b6b1; border-radius: 4px 4px 0 0; white-space: nowrap; }
.idle { width: 117px; height: 26px; padding-left: 6px; gap: 2px; background: linear-gradient(#ebe9e7, #dcdad7); color: #777; }
.live { width: 138px; height: 28px; margin: 0 0 -1px 1px; border-bottom: 0; background: #f7f6f5; color: #4b4b4b; padding: 0 0 2px 6px; gap: 4px; }
.close { width: 26px; height: 18px; border: 1px solid #aaa; border-radius: 4px; display: flex; align-items: center; justify-content: center; background: #fafafa; }
.tools-r { margin-left: auto; display: flex; gap: 10px; padding-right: 10px; }
.tools-r i { width: 26px; height: 26px; background: #f8f8f7; display: flex; align-items: center; justify-content: center; }

.view { height: 794px; flex: none; background: linear-gradient(#808080 50%, #636363 50%); border: 1px solid #f4f4f4; border-right-color: #8a8a88; padding: 11px 3px 11px 1px; box-shadow: inset 1px 0 #777; }
.paint { position: relative; width: 1367px; height: 769px; border: 1px solid #222; border-width: 1px 0 0 1px; border-right: 2px solid #0000f4; background: #fffff8; display: flex; flex-direction: column; overflow: hidden; font-size: 11px; color: #333; }
.ptitle { height: 23px; flex: none; display: flex; align-items: center; color: #111; }
.bar { width: 1px; height: 12px; background: #aaa; }
.ptitle .bar:nth-of-type(1) { margin-left: 7px; }
.q1 { margin-left: 10px; } .q2 { margin-left: 8px; } .q3 { margin-left: 8px; } .q4 { margin: 2px 8px 0 8px; }
.ptitle span { margin-left: 7px; width: 80px; letter-spacing: .2px; white-space: nowrap; }
.wc { margin-left: 1042px; margin-top: -2px; }
.ptabs { height: 24px; flex: none; display: flex; border-bottom: 1px solid #d0dede; line-height: 23px; text-align: center; }
.file { width: 56px; background: #1979ca; color: #fff; }
.home { width: 58px; height: 24px; border: 1px solid #d0dede; border-bottom: 0; background: #f5ffff; line-height: 22px; }
.vw { width: 55px; color: #444; }
.up { margin: 9px 0 0 1160px; color: #999; transform: rotate(180deg); }
.help { width: 16px; height: 16px; border-radius: 8px; background: #0e63b8; color: #fff; font-weight: 700; font-size: 12px; line-height: 16px; margin: 3px 0 0 10px; }
.ribbon { height: 92px; flex: none; display: flex; background: #f5ffff; border-bottom: 1px solid #c9dce0; }
.grp { height: 91px; display: flex; flex-direction: column; border: 0 solid; border-image: linear-gradient(transparent 3%, #dfecec 3%, #dfecec 95%, transparent 95%) 1; border-width: 0 1px 0 0; }
.grp label { height: 20px; line-height: 21px; text-align: center; color: #555; padding-right: 2px; }
.row { height: 72px; display: flex; align-items: flex-start; }
.big { display: flex; flex-direction: column; align-items: center; padding-top: 7px; text-align: center; line-height: 13px; white-space: nowrap; }
.big span { margin-top: 3px; }
.car { width: 5px; height: 3px; margin-top: 5px; }
.col { padding-top: 3px; }
.col div { height: 22px; display: flex; align-items: center; gap: 4px; white-space: nowrap; }
.col .car { margin: 0; }
.off { color: #8c8c94; }
.g-clip { width: 107px; } .g-clip .big { width: 52px; padding-left: 2px; }
.g-clip .col { margin-left: -2px; }
.g-img { width: 122px; } .g-img .big { width: 49px; }
.g-img .col { margin-left: 2px; }
.g-img .col div:last-child { gap: 3px; }
.g-tools { width: 80px; }
.toolgrid { height: 72px; padding: 16px 5px 12px 3px; display: grid; grid-template-columns: repeat(3, 24px); grid-template-rows: 16px 16px; row-gap: 12px; justify-items: center; }
.glyphA { font: 700 19px/16px "Liberation Serif", serif; color: #223058; }
.g-brush { width: 56px; } .g-brush .big { width: 52px; }
.g-shapes { width: 246px; } .gallery { margin: 7px 6px 0 5px; }
.g-shapes .col div { gap: 3.500px; }
.g-size { width: 53px; } .g-size .big { width: 49px; }
.g-colors { width: 357px; }
.g-colors .big { width: 42px; }
.g-colors .big.sel { height: 67px; margin: 4px 0 0 4px; padding-top: 2px; border: 1px solid #84a8e0; background: #d3effd; }
.c1, .c2 { border: 1px solid #7a8a8c; box-shadow: inset 0 0 0 1px #f5ffff; }
.c1 { width: 32px; height: 32px; background: #000; }
.c2 { width: 24px; height: 24px; margin: 4px 0; background: #fffff8; }
.pal { display: grid; grid-template-columns: repeat(10, 20px); gap: 2px; padding: 5px 0 0 1px; }
.pal i { height: 20px; border: 1px solid #a0aaaa; box-shadow: inset 0 0 0 1px #fffff8; }
.k1 { background: #000; } .k2 { background: #787c74; } .k3 { background: #880010; } .k4 { background: #f42028; } .k5 { background: #ff7c28; } .k6 { background: #fffa00; } .k7 { background: #22b24c; } .k8 { background: #00a0ec; } .k9 { background: #3c48cc; } .k10 { background: #a048a8; }
.k11 { background: #fffff8; } .k12 { background: #cccfc6; } .k13 { background: #c08058; } .k14 { background: #ffaed0; } .k15 { background: #ffcc0c; } .k16 { background: #ece8b4; } .k17 { background: #b8e81e; } .k18 { background: #94d8ee; } .k19 { background: #7494c4; } .k20 { background: #c8bfe6; }
.g-3d { width: 62px; } .g-3d .big { width: 57px; }

.work { height: 546px; flex: none; display: flex; }
.canvas { position: relative; width: 1349px; height: 546px; padding-left: 5px; background: linear-gradient(#dcdcf0 0 540px, #b0b4cc 540px, #c8c8e4 543px, #e4e4f8 546px); overflow: hidden; }
.page { position: relative; height: 443px; display: flex; overflow: hidden; background: #fffff8; }
.side { width: 220px; margin: -5px 0 0; padding: 0; list-style: none; background: #4b0044; color: #fff; font-size: 13px; flex: none; }
.side li { height: 51px; display: flex; align-items: center; padding: 0 11px 0 17px; border-bottom: 1px solid #3a2a4c; }
.side span { margin-left: 12px; flex: 1; }
.side svg:first-child { margin-top: -3px; }
.side .weye { margin: -2px -1px 0 -1px; }
.ch { width: 9px; height: 6px; }
.back { width: 1107px; padding-left: 2px; background: #f7e8f0; font-size: 12px; color: #65717f; flex: none; }
.band { height: 29px; border-bottom: 1px solid #fffff8; }
.br { height: 39px; display: grid; grid-template-columns: 166px 165px 165px 165px 132px 132px 180px; border-bottom: 1px solid #c5afbd; background: #f5ffff; }
.br:nth-child(2n) { background: #f7e8f0; }
.br.hd { height: 27px; background: #edf0e6; font-size: 11px; font-weight: 600; color: #333; }
.br span { display: flex; align-items: center; justify-content: center; border-right: 1px solid #c5afbd; white-space: nowrap; }
.br.hd span { padding: 0 2px 2px 0; }
.br.last { height: 37px; }
.br.last b { margin-top: 2px; }
.br span:last-child { border-right-color: #f7e8f0; }
.br b { width: 49px; height: 28px; border-radius: 4px; background: #4b0044; display: flex; align-items: center; justify-content: center; padding: 0 5px 3px 0; }
.modal { position: absolute; left: 220px; top: -6px; width: 891px; height: 414px; background: #fffff8; box-shadow: 0 0 0 4.500px rgba(0,0,0,.22); padding: 6px 0 0 15px; color: #65717f; font-size: 12px; }
.job { width: 851px; height: 65px; border-top: 3px solid #edf0e6; border-bottom: 1px solid #f0e2f4; display: grid; grid-template-columns: 158px 140px 165px 146px 116px 126px; background: #f5ffff; }
.job span { border-top: 1px solid #c5afbd; border-right: 1px solid #c5afbd; display: flex; align-items: center; justify-content: center; text-align: center; line-height: 25px; white-space: nowrap; padding-bottom: 2px; }
.job span:nth-child(5) { padding-bottom: 0; }
.job span:last-child { border-right-color: #f0e2f4; }
.modal h2 { margin: 0; width: 857px; height: 28px; line-height: 17px; font-size: 15.8px; font-weight: 700; text-align: center; color: #36474f; }
.tt { width: 854px; margin-left: 2px; border-left: 1px solid #f0e2f4; border-bottom: 1px solid #d8c8d8; }
.tr { height: 36px; display: grid; grid-template-columns: 114px 91px 68px 85px 80px 73px 42px 70px 97px 91px 42px; border-bottom: 1px solid #c5afbd; background: #f5ffff; }
.tr:nth-child(odd) { background: #f7e8f0; }
.tr:last-child { border-bottom-color: #f0e2f4; }
.tr.th { height: 27px; background: #edf0e6; font-size: 11px; font-weight: 700; color: #3a3a3a; }
.tr span { display: flex; align-items: center; justify-content: center; border-right: 1px solid #c5afbd; white-space: nowrap; }
.tr.th span { padding-bottom: 2px; }
.tr span:last-child { border-right-color: #f0e2f4; }

.dl { height: 57px; background: #fffff8; border-top: 1px solid #cddfe3; display: flex; align-items: center; padding-left: 20px; font-size: 12.2px; color: #4a5560; }
.dl span { margin-left: 12px; width: 94px; white-space: nowrap; }
.dlc { margin-left: 64px; transform: rotate(180deg); color: #555; }
.dl i { width: 1px; height: 45px; background: #b5ccd6; margin-left: 18px; }
.dl b { margin-left: 1015px; margin-top: -2px; width: 78px; height: 32px; border: 1px solid #cde0e8; border-radius: 4px; text-align: center; line-height: 30px; font-size: 11.3px; font-weight: 600; color: #2d6fd2; }
.dl em { margin-left: 12px; }
.taskbar { width: 1366px; height: 40px; flex: none; display: flex; overflow: hidden; color: #fff; white-space: nowrap; background: linear-gradient(90deg, #22353a 0 840px, #1d2f33 920px, #122f38 950px, #12333f 991px, #121c3c 993px); }
.start { width: 48px; display: flex; align-items: center; justify-content: center; }
.search { width: 288px; border: 1px solid #c4cac4; background: #fffff8; display: flex; align-items: center; padding-left: 11px; color: #333; font-size: 13.900px; }
.search span { margin-left: 11px; width: 129px; }
.cas { margin-left: 40px; align-self: flex-end; }
.ta { border-bottom: 2px solid #76b9ed; display: flex; align-items: center; justify-content: center; width: 40px; height: 40px; }
.ta.act { width: 48px; background: #455a5e; }
.ol { margin-left: 7px; }
.cr { margin: 0 5px 0 9px; } .cr.act { margin: 0 5px 0 5px; }
.pt svg { margin-right: 1px; }
.ad { margin-left: 9px; } .act.pt + .ad { margin-left: 5px; }
.systray { margin-left: auto; width: 296px; display: flex; align-items: center; font-size: 12px; }
.systray > svg:first-child { margin-left: 5px; margin-top: -4px; }
.s2 { margin-left: 17px; transform: rotate(180deg); } .s3 { margin-left: 9px; } .s4 { margin-left: 11px; } .s5 { margin-left: 10px; }
.lang { margin-left: 8px; width: 24px; font-size: 11.5px; }
.clk { width: 60px; margin-left: 12px; text-align: center; font-size: 11.5px; line-height: 18px; letter-spacing: -.2px; }
.nt { position: relative; margin-left: 16px; }
.nt b { position: absolute; left: 7px; top: 6px; width: 17px; height: 17px; border-radius: 9px; background: #3a3a42; border: 1px solid #777; font-size: 11px; line-height: 15px; text-align: center; }
.arrows { position: absolute; left: 230px; top: 0; }
.handle { position: absolute; left: 686px; top: 540px; width: 5px; height: 5px; background: #fff; border: 1px solid #555; }
.mark { position: absolute; color: rgba(140,140,140,.55); white-space: nowrap; line-height: 22px; }
.mark p { margin: 0; font-size: 19.100px; }
.mark small { font-size: 14.400px; }
.m1 { left: 1078px; top: 423px; }
.m2 { left: 1073px; top: 651px; }
.vs { width: 15px; display: flex; flex-direction: column; align-items: center; color: #555; padding: 6px 0 5px 1px; }
.vs svg:first-child { transform: rotate(180deg); }
.vs i { width: 14px; height: 359px; margin: 158px 0 6px; background: #ccd0c6; }
.hs { height: 17px; flex: none; display: flex; align-items: center; padding-left: 5px; border-bottom: 1px solid #d8dcd4; }
.hs i { width: 1288px; height: 15px; background: #ccd0c6; margin: 0 33px 0 6px; }
.pstat { height: 26px; flex: none; display: flex; color: #111; white-space: nowrap; letter-spacing: -.1px; }
.pstat > div { width: 156px; border-right: 1px solid #d8d8d2; display: flex; align-items: center; padding-left: 5px; gap: 6px; }
.pstat .p5 { width: 544px; }
.pstat .zoom { width: 197px; border: 0; padding-left: 22px; gap: 7px; }

.status { flex: 1; display: flex; align-items: center; background: #f2f1f0; border-top: 1px solid #c0bdb8; color: #4b4b4b; font: 14.200px "Noto Sans", sans-serif; padding-left: 2px; }
.conn { margin-left: 5px; width: 300px; white-space: nowrap; letter-spacing: .04px; }
.time { margin-left: 859px; width: 58px; flex: none; white-space: nowrap; }
.sico { margin-left: 12px; }
.grip { margin: 6px 0 0 auto; }
```
